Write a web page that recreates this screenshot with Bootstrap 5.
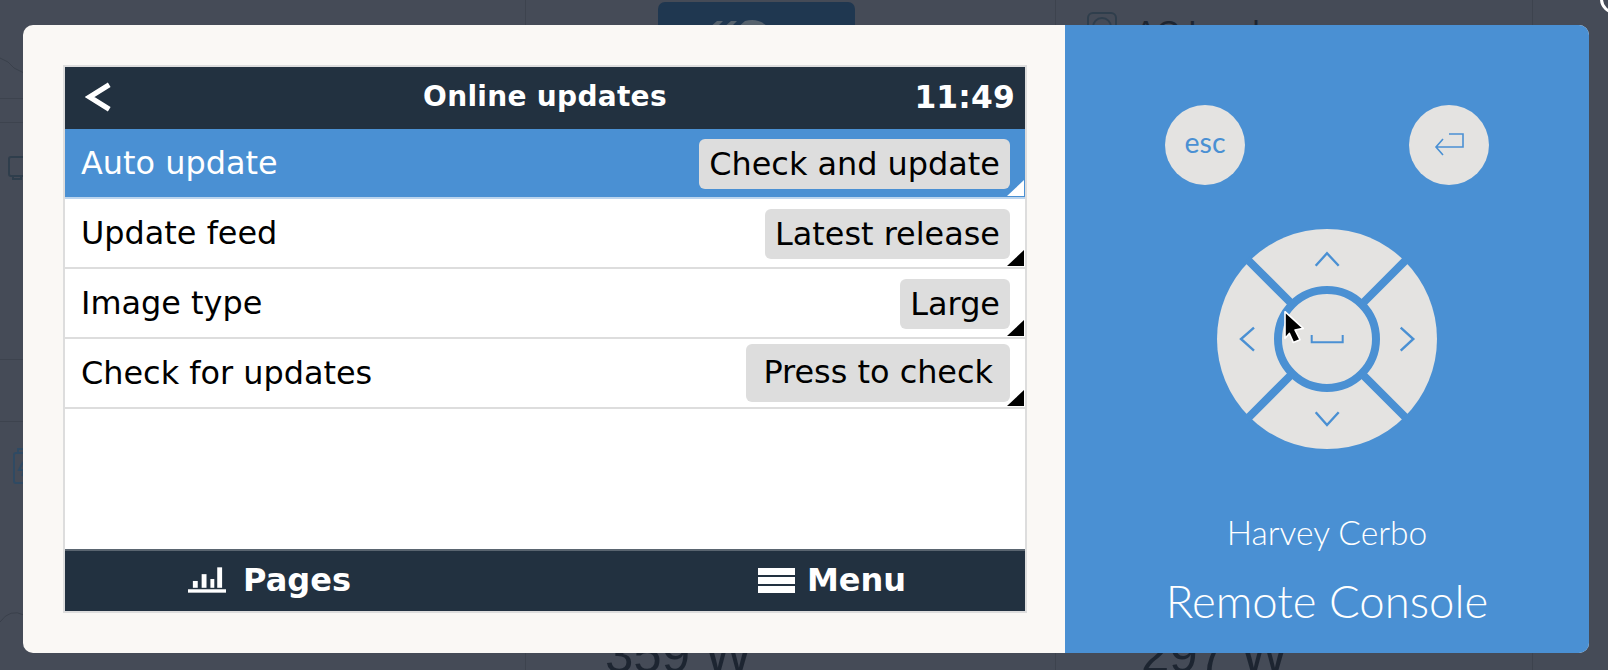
<!DOCTYPE html>
<html lang="en">
<head>
<meta charset="utf-8">
<title>Remote Console</title>
<link rel="stylesheet" href="https://cdn.jsdelivr.net/npm/bootstrap@5.3.0/dist/css/bootstrap.min.css">
<style>
html,body{height:670px;overflow:hidden}
body{background:#454b57;position:relative;font-family:"DejaVu Sans",sans-serif}
.dash{position:absolute;inset:0;overflow:hidden}
.vl{position:absolute;top:0;bottom:0;width:1px;background:#3d434e}
.hl{position:absolute;left:0;width:24px;height:1px;background:#3d434e}
.dash-num{position:absolute;top:624px;font:400 51px/62px "Liberation Sans",sans-serif;color:#1d2531;white-space:nowrap}
.dash-label{position:absolute;top:13px;left:1135px;font:400 32px/38px "Liberation Sans",sans-serif;color:#1d2531;white-space:nowrap}
.dash-blue{position:absolute;left:658px;top:2px;width:197px;height:40px;background:#1f3750;border-radius:7px}
.dash-icon{position:absolute;fill:none;stroke:#2f3e4c;stroke-width:2}
.dash-curve{position:absolute;left:0;top:0;fill:none;stroke:#3a404b;stroke-width:1}
.close-ring{position:absolute;left:1600px;top:-16px;width:30px;height:30px;border:3px solid #fff;border-radius:50%}
.vmodal{position:relative;margin:25px 19px 0 23px;width:1566px;height:628px;border-radius:10px;overflow:hidden;background:#faf8f5}
.vleft{width:1042px;padding:40px}
.vconsole{width:964px;height:548px;border:2px solid #ddd;background:#fff}
.vbar{height:62px;background:#223140;color:#fff;font-weight:700}
.vhead{position:relative;padding:0 10px 2px 18px}
.vtitle{font-size:28px;letter-spacing:.3px}
.vtime{font-size:31.3px;letter-spacing:.2px}
.vtitle-wrap{position:absolute;left:0;right:0;text-align:center}
.vlist{flex:1 1 auto;background:#fff}
.vitem{height:70px;padding:0 15px 0 16px;border:0;border-bottom:2px solid #ddd!important;border-radius:0!important;font-size:31.9px;color:#000;position:relative;background:transparent;margin:0}
.vitem.is-active{background:#4a90d3;color:#fff;border-bottom-color:#bcd5ee!important}
.vlabel{padding-top:2px}
.vpill{height:50px;background:#ddd;color:#000;border-radius:6px;padding:1px 10px 0;margin-top:2px;display:flex;align-items:center}
.vpill.tall{height:58px;padding:0 17px;margin-top:0}
.vtri{position:absolute;right:1px;bottom:1px;width:0;height:0;border-style:solid;border-width:0 0 16px 17px;border-color:transparent transparent #000 transparent}
.vitem.is-active .vtri{border-bottom-color:#fff}
.vfoot{font-size:32px;border-top:2px solid #5a6570;height:62px;padding-bottom:2px}
.vfoot .pg{padding-right:71px;gap:17px}
.vfoot .mn{padding-left:94px;gap:12px}
.vburger{display:block;width:37px;height:25px;background:linear-gradient(#fff 0 7px,transparent 7px 9px,#fff 9px 16px,transparent 16px 18px,#fff 18px)}
.vright{width:524px;background:#4a90d3;color:#fff;font-family:Lato,sans-serif;padding-top:80px}
.vkeys{gap:164px}
.vkey{width:80px;height:80px;background:#e4e3e1;color:#4a90d3;font-size:28.5px;padding-bottom:5px}
.vpad{display:block;margin-top:44px;overflow:visible}
.vname{font-size:33.6px;line-height:38px;margin-top:64px;font-weight:300}
.vrc{font-size:45.5px;line-height:52px;margin-top:24px;font-weight:300}
.blue-s{fill:none;stroke:#4a90d3;stroke-width:2.4}
</style>
</head>
<body>
<div class="dash" aria-hidden="true">
  <div class="vl" style="left:525px"></div>
  <div class="vl" style="left:1055px"></div>
  <div class="vl" style="left:1532px"></div>
  <div class="hl" style="top:98px"></div>
  <div class="hl" style="top:122px"></div>
  <div class="hl" style="top:359px"></div>
  <div class="hl" style="top:421px"></div>
  <svg class="dash-curve" width="24" height="670" viewBox="0 0 24 670"><path d="M0 58 8 62 14 68 24 73M0 622Q10 608 24 615"/></svg>
  <div class="dash-blue"></div>
  <svg class="dash-icon" style="left:705px;top:18px;stroke:none;fill:#56626d" width="66" height="10" viewBox="0 0 66 10"><path d="M4 10 12 3h6l-7 7zM18 10 26 3h6l-7 7zM32 10 40 3q14-4 24 7z"/></svg>
  <div class="dash-label">AC Loads</div>
  <div class="dash-num" style="left:605px">359 W</div>
  <div class="dash-num" style="left:1141px">297 W</div>
  <svg class="dash-icon" style="left:8px;top:156px" width="18" height="28" viewBox="0 0 18 28"><rect x="1" y="1" width="22" height="19" rx="2"/><path d="M5 20v3h8v-3"/></svg>
  <svg class="dash-icon" style="left:13px;top:448px;stroke:#2f4a63" width="12" height="38" viewBox="0 0 12 38"><rect x="1" y="5" width="22" height="30" rx="2"/><path d="M5 5V1h8M10 14l-4 8h5l-2 6"/></svg>
  <svg class="dash-icon" style="left:1087px;top:12px" width="30" height="30" viewBox="0 0 30 30"><rect x="1" y="1" width="28" height="28" rx="5"/><circle cx="15" cy="15" r="9"/></svg>
  <div class="close-ring"></div>
</div>

<div class="vmodal d-flex">
  <div class="vleft">
    <div class="vconsole d-flex flex-column">
      <div class="vbar vhead d-flex align-items-center justify-content-between">
        <svg width="30" height="30" viewBox="0 0 30 32"><path d="M27 3 6 16l21 13" fill="none" stroke="#fff" stroke-width="5.5"/></svg>
        <div class="vtitle-wrap vtitle">Online updates</div>
        <div class="vtime">11:49</div>
      </div>
      <div class="list-group list-group-flush vlist">
        <div class="list-group-item vitem is-active d-flex align-items-center justify-content-between"><span class="vlabel">Auto update</span><span class="vpill">Check and update</span><i class="vtri"></i></div>
        <div class="list-group-item vitem d-flex align-items-center justify-content-between"><span class="vlabel">Update feed</span><span class="vpill">Latest release</span><i class="vtri"></i></div>
        <div class="list-group-item vitem d-flex align-items-center justify-content-between"><span class="vlabel">Image type</span><span class="vpill">Large</span><i class="vtri"></i></div>
        <div class="list-group-item vitem d-flex align-items-center justify-content-between"><span class="vlabel">Check for updates</span><span class="vpill tall">Press to check</span><i class="vtri"></i></div>
      </div>
      <div class="vbar vfoot row g-0">
        <div class="col-6 d-flex align-items-center justify-content-center pg">
          <svg width="38" height="26" viewBox="0 0 39 26" fill="#fff"><rect x="5" y="14" width="5" height="7"/><rect x="14" y="7" width="5" height="14"/><rect x="23" y="12" width="4" height="9"/><rect x="30" y="0" width="5" height="21"/><rect x="0" y="22.5" width="39" height="3.5"/></svg>
          <span>Pages</span>
        </div>
        <div class="col-6 d-flex align-items-center justify-content-center mn">
          <span class="vburger"></span>
          <span>Menu</span>
        </div>
      </div>
    </div>
  </div>
  <div class="vright d-flex flex-column align-items-center">
    <div class="d-flex vkeys">
      <div class="vkey rounded-circle d-flex align-items-center justify-content-center">esc</div>
      <div class="vkey rounded-circle d-flex align-items-center justify-content-center" style="padding-bottom:0">
        <svg width="30" height="24" viewBox="0 0 30 24"><path class="blue-s" style="stroke-width:1.6" d="M15 1h14v13H2M9 6l-7 8 7 8"/></svg>
      </div>
    </div>
    <svg class="vpad" width="220" height="220" viewBox="0 0 220 220">
      <circle cx="110" cy="110" r="110" fill="#e4e3e1"/>
      <path d="M33 33l45 45M187 33l-45 45M33 187l45-45M187 187l-45-45" stroke="#4a90d3" stroke-width="8" fill="none" stroke-linecap="square"/>
      <circle cx="110" cy="110" r="49" fill="#e4e3e1" stroke="#4a90d3" stroke-width="8"/>
      <path class="blue-s" d="M98.7 36.7 110 24.3l11.7 12.4M98.7 183.3 110 196l11.7-12.7M37 98.7 24 110l13 11.7M183.7 98.7 196.3 110l-12.6 11.7"/>
      <path class="blue-s" style="stroke-width:2" d="M94.7 106v7.3h31V106"/>
      <path transform="translate(68 82.7)" d="M0 0 18.3 16.7 10 18.3 15 28 8.3 30.7 4.3 21.7 0 26.7Z" fill="#000" stroke="#fff" stroke-width="1.6" stroke-linejoin="round"/>
    </svg>
    <div class="vname">Harvey Cerbo</div>
    <div class="vrc">Remote Console</div>
  </div>
</div>
<script src="https://cdn.jsdelivr.net/npm/bootstrap@5.3.0/dist/js/bootstrap.bundle.min.js"></script>
</body>
</html>
